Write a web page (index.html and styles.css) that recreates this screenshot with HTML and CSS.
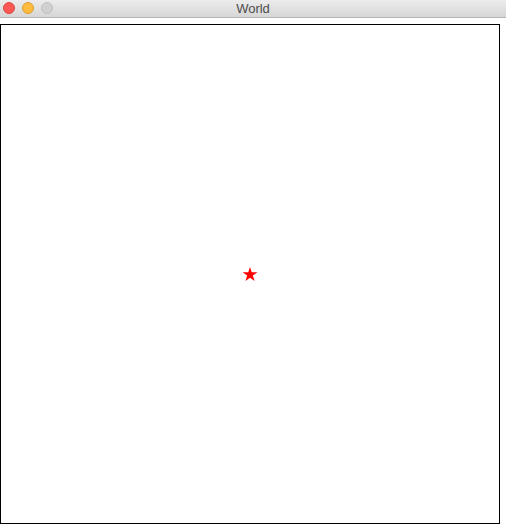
FILE: index.html
```html
<!DOCTYPE html>
<html>
<head>
<meta charset="utf-8">
<link rel="stylesheet" href="styles.css">
</head>
<body>
<div class="titlebar">
  <div class="lights">
    <span class="light red"></span>
    <span class="light yellow"></span>
    <span class="light gray"></span>
  </div>
  <div class="title">World</div>
</div>
<div class="content">
  <div class="world">
    <svg class="star" width="16" height="16" viewBox="0 0 16 16">
      <polygon fill="#ff0000" points="8,0.9 9.75,6.29 15.42,6.29 10.83,9.62 12.59,15.01 8,11.68 3.41,15.01 5.17,9.62 0.58,6.29 6.25,6.29"/>
    </svg>
  </div>
</div>
</body>
</html>
```
FILE: styles.css
```css
html, body {
  margin: 0;
  padding: 0;
  background: #ffffff;
  width: 506px;
  height: 524px;
  overflow: hidden;
}
.titlebar {
  position: relative;
  height: 17px;
  background: linear-gradient(#ececec, #d6d6d6);
  border-bottom: 1px solid #b4b4b4;
  display: flex;
  align-items: center;
  justify-content: center;
}
.lights {
  position: absolute;
  left: 3px;
  top: 2px;
  display: flex;
  gap: 7px;
}
.light {
  width: 12px;
  height: 12px;
  border-radius: 50%;
  box-sizing: border-box;
}
.red { background: #fc5753; border: 1px solid #df4744; }
.yellow { background: #fdbc40; border: 1px solid #de9f34; }
.gray { background: #d0d0d0; border: 1px solid #c0c0c0; }
.title {
  font-family: "Liberation Sans", Arial, sans-serif;
  font-size: 13px;
  color: #4d4d4d;
  line-height: 17px;
}
.content {
  padding-top: 6px;
}
.world {
  width: 500px;
  height: 500px;
  box-sizing: border-box;
  border: 1px solid #000;
  display: flex;
  align-items: center;
  justify-content: center;
}
.star {
  display: block;
}
```
